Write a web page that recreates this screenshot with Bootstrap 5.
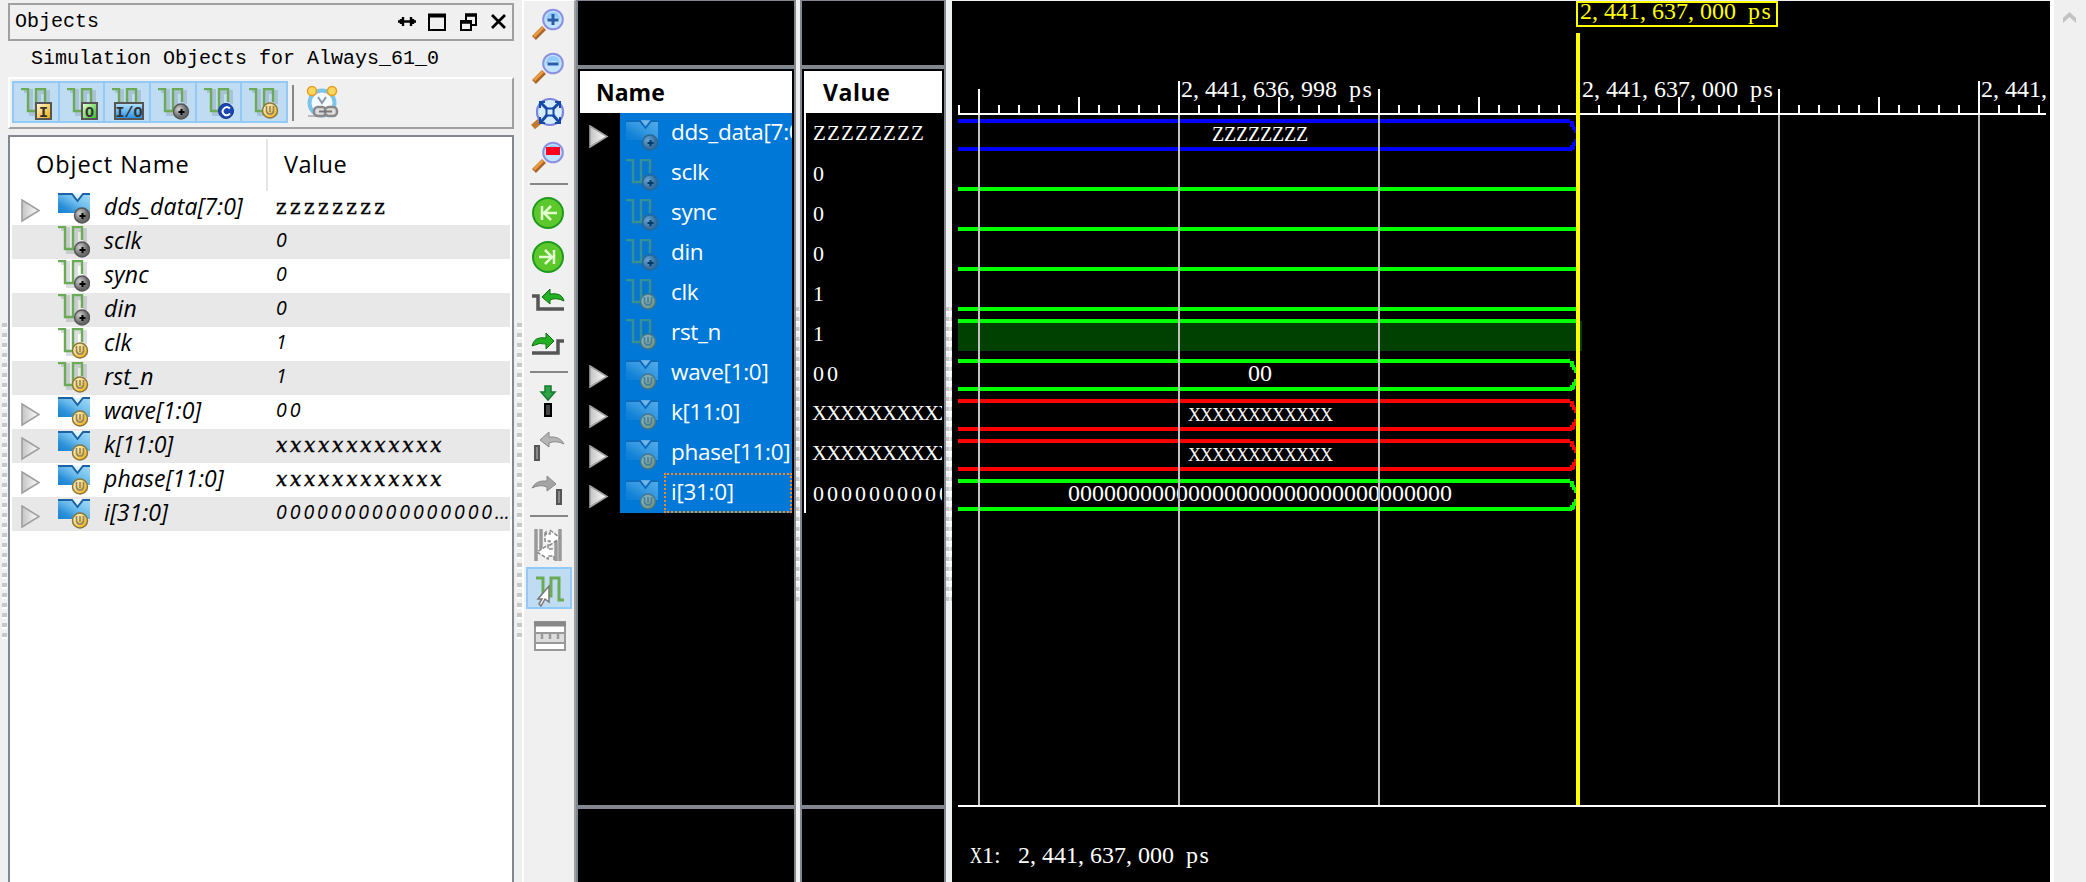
<!DOCTYPE html>
<html lang="en">
<head>
<meta charset="utf-8">
<title>Simulation Objects</title>
<link href="https://cdn.jsdelivr.net/npm/bootstrap@5.3.0/dist/css/bootstrap.min.css" rel="stylesheet">
<script src="https://cdn.jsdelivr.net/npm/bootstrap@5.3.0/dist/js/bootstrap.bundle.min.js"></script>
<style>
body{background:#f0f0f0;color:#000;height:882px;font-family:"Open Sans","Noto Sans",sans-serif;font-size:22.5px;line-height:1}
svg{display:block;flex:none}
.sim{font-family:"Liberation Mono",monospace;font-size:20px;white-space:pre}
/* objects panel */
.objects{width:522px;padding:3px 8px 0 8px}
.title-box{width:506px;height:38px;border:2px solid #a0a0a0;padding:0 6px 0 5px}
.sub-title{height:36px;padding:8px 0 0 23px}
.tool-row{width:506px;height:52px;border:2px solid;border-color:#fff #a0a0a0 #a0a0a0 #fff;padding:2px}
.filters{width:276px;height:42px;background:#91c9f7;padding:2px 0 2px 2px;gap:2px}
.filters>span{width:43.7px;height:38px;background:#c0dcf3;padding:5px 0 0 6px}
.tool-sep{width:2px;height:36px;background:#868686;margin:4px 12px 0 4px}
.tree{width:506px;height:760px;margin-top:6px;border:2px solid #828790;background:#fff;padding:2px}
.tree-head{height:52px;font-size:23.5px}
.tree-head .c1{width:256px;padding:14px 0 0 24px;border-right:2px solid #e5e5e5;letter-spacing:.95px}
.tree-head .c2{padding:14px 0 0 16px;letter-spacing:.5px}
.tree-row{height:34px;padding-left:9px}
.tree-row .arrow{width:37px}
.tree-row .icon{width:46px;padding-top:1px}
.tree-row .label{width:172px;font-style:italic;font-size:23px;letter-spacing:.15px;white-space:nowrap;padding-top:4px}
.tree-row .val{font-style:italic;white-space:nowrap;padding-top:5px;font-size:19.5px;letter-spacing:2.95px}
.tree-row .val.slab{font:italic 20px/1 "DejaVu Serif",serif;padding-top:6px;-webkit-text-stroke:.4px #000}
.slab.cx{letter-spacing:2.75px!important}
.slab.cz{letter-spacing:3.5px!important}
.tree-row .val.up{font-style:normal}
.grip{width:5px;height:316px;top:323px;background:repeating-linear-gradient(#c8c8c8 0 4px,#fff 4px 6px,#f0f0f0 6px 10px)}
/* icon toolbar */
.tools{width:54px;border-left:2px solid #fff;border-top:1px solid #fff;border-right:2px solid #a0a0a0}
/* list panes */
.pane{background:#000;border:2px solid #828790;border-top-width:1px;border-bottom:0;color:#fff}
.pane .top{height:64px}
.pane .head{height:48px;border-top:4px solid #828790;padding:2px 2px 0}
.pane .head div{background:#fff;color:#000;font-weight:700;height:42px;padding:10px 0 0 16px;font-size:23px}
.pane .mid{height:692px}
.pane .low{height:77px;border-top:4px solid #828790}
.names{width:220px}.values{width:146px}
.sel{background:#0078d7;width:172px;margin-right:2px}
.name-row{height:40px}
.name-row .arrow{width:42px;padding:12px 0 0 11px}
.name-row .icon{width:45px;padding:6px 0 0 6px;opacity:.5}
.name-row .label{width:127px;height:40px;padding:8px 0 0 6px;white-space:nowrap;overflow:hidden;letter-spacing:-.3px}
.name-row.cur .label{outline:2px dotted #f08a28;outline-offset:-2px;width:128px;margin-left:-1px;padding-left:7px}
.value-list{margin:0 2px;border-left:2px solid #fff;width:138px}
.value-list div{height:40px;padding:10px 0 0 7px;overflow:hidden;white-space:nowrap;font:22px/1 "Liberation Serif",serif;letter-spacing:3px}
.value-list .slab{font-size:21px}
.value-list .slab.cx{letter-spacing:-1.16px!important;padding-left:6px}
.value-list .slab.cz{letter-spacing:1.17px!important}
.split{background:#f0f0f0}
.split i{display:block;margin-top:307px;height:294px;background:repeating-linear-gradient(90deg,transparent 0 3px,#fff8 3px 5px),repeating-linear-gradient(#c8c8c8 0 4px,#fff 4px 6px,#f0f0f0 6px 10px)}
.scroller{width:36px;border-left:4px solid #fff}
</style>
</head>
<body class="overflow-hidden">
<svg width="0" height="0" class="position-absolute">
<defs>
<linearGradient id="gB" x1="0" y1="1" x2="1" y2="0"><stop offset="0" stop-color="#1a84d0"/><stop offset=".25" stop-color="#2c90d8"/><stop offset=".55" stop-color="#6cbcec"/><stop offset="1" stop-color="#a4dcf8"/></linearGradient>
<radialGradient id="gG" cx=".35" cy=".35"><stop offset="0" stop-color="#d0d0d0"/><stop offset="1" stop-color="#6a6a6a"/></radialGradient>
<linearGradient id="gY" x1="0" y1="0" x2="1" y2="1"><stop offset="0" stop-color="#fffbe0"/><stop offset="1" stop-color="#f0a800"/></linearGradient>
<linearGradient id="gN" x1="0" y1="0" x2="1" y2="1"><stop offset="0" stop-color="#eaffd8"/><stop offset="1" stop-color="#2fb81e"/></linearGradient>
<linearGradient id="gC" x1="0" y1="0" x2="0" y2="1"><stop offset="0" stop-color="#b8e4ff"/><stop offset="1" stop-color="#1e90e8"/></linearGradient>
<linearGradient id="gT" x1="0" y1="0" x2="1" y2="0"><stop offset="0" stop-color="#c4c4c4"/><stop offset="1" stop-color="#fff"/></linearGradient>
<g id="wavy"><path d="M3 3H10V26H18V4H27V16" fill="none" stroke="#5a6a70" stroke-opacity=".22" stroke-width="4"/><path d="M0 1H7V23H15V1H24V14" fill="none" stroke="#6cab55" stroke-width="2.400"/></g>
<g id="busy"><path d="M0 1H32V20H0Z" fill="url(#gB)"/><path d="M14 0L19.500 7L25 0Z" fill="#fff" fill-opacity=".75"/><path d="M0 1H14L19.500 8L25 1H32" fill="none" stroke="#1c62a4" stroke-width="2"/></g>
<g id="b-n"><circle cx="24" cy="23.500" r="7.500" fill="url(#gG)" stroke="#555" stroke-width="1.400"/><path d="M24.500 21V27M21.500 24H27.500" stroke="#000" stroke-width="2"/></g>
<g id="b-v"><circle cx="22" cy="22.500" r="7.500" fill="url(#gY)" stroke="#8a7638" stroke-width="1.500"/><path d="M18.500 18V23Q19 26 22 26T25.500 23V18M22 18V24" fill="none" stroke="#8f8660" stroke-width="1.600"/></g>
<g id="b-c"><circle cx="23" cy="23" r="7.500" fill="#1c45b4" stroke="#16368c"/><path d="M27 20.500Q23 17.500 20.500 21T22 27Q25 28 27 25.500" fill="none" stroke="#fff" stroke-width="2"/></g>
<g id="mag"><path d="M2 30L12 20" stroke="#a8662a" stroke-width="5.500"/><path d="M2 28.500L11 19.500" stroke="#ef9a3c" stroke-width="2.500"/><circle cx="21" cy="11.500" r="9.800" fill="#c0e4ff" stroke="#8c90e0" stroke-width="2"/><path d="M13.500 12Q20 6 28 11Q27 4 21 4T13.500 12Z" fill="#90caff"/></g>
</defs></svg>

<div class="d-flex" style="height:882px">
 <section class="objects position-relative flex-shrink-0">
  <div class="title-box d-flex align-items-center justify-content-between"><span class="sim">Objects</span>
   <svg width="110" height="20" viewBox="0 0 110 20" fill="none" stroke="#000" stroke-width="2"><path d="M2 9.500H20M7 5V14M5 7V12M15 5V14M17 7V12" stroke-width="2.400"/><path d="M33 3H49V18H33Z"/><path d="M32 3.500H50" stroke-width="4"/><path d="M65 9H75V18H65ZM70 8V3H80V13H76"/><path d="M64 10H76M69 3H81" stroke-width="3.500"/><path d="M96 3L109 16M109 3L96 16" stroke-width="2.800"/></svg>
  </div>
  <div class="sub-title sim">Simulation Objects for Always_61_0</div>
  <div class="tool-row d-flex">
   <div class="filters d-flex" id="filters"></div>
   <div class="tool-sep"></div>
   <svg class="mt-1" width="34" height="34" viewBox="0 0 34 34"><circle cx="16" cy="18" r="12.500" fill="#f4faff" stroke="#7cc4ec" stroke-width="4"/><circle cx="6" cy="6" r="4.500" fill="#ffd75c" stroke="#e0a020" stroke-width="1.500"/><circle cx="26" cy="6" r="4.500" fill="#ffd75c" stroke="#e0a020" stroke-width="1.500"/><path d="M12 12L16 18L20 12" stroke="#8898a8" stroke-width="2" fill="none"/><path d="M2 31H10" stroke="#bbb" stroke-width="2"/><rect x="8" y="22" width="12" height="9" rx="4" fill="#ddd" stroke="#888" stroke-width="2.500"/><rect x="19" y="22" width="12" height="9" rx="4" fill="#ddd" stroke="#888" stroke-width="2.500"/><path d="M13 26.500H26" stroke="#777" stroke-width="2"/></svg>
  </div>
  <div class="tree">
   <div class="tree-head d-flex"><div class="c1">Object Name</div><div class="c2">Value</div></div>
   <div id="tree"></div>
  </div>
  <div class="grip position-absolute start-0 ms-0" style="margin-left:2px!important"></div>
  <div class="grip position-absolute end-0"></div>
 </section>

 <nav class="tools flex-shrink-0">
  <svg width="50" height="670" viewBox="524 1 50 670">
   <g transform="translate(532 8)"><use href="#mag"/><path d="M21 6V17M15.500 12H26.500" stroke="#2a5ca8" stroke-width="3"/></g>
   <g transform="translate(532 52)"><use href="#mag"/><path d="M15.500 12H26.500" stroke="#2a5ca8" stroke-width="3"/></g>
   <g transform="translate(532 97)"><path d="M1 30L8 24" stroke="#c47830" stroke-width="6"/><circle cx="18" cy="15" r="13" fill="#d4ecff" stroke="#7c84dc" stroke-width="2.200"/><path d="M9 6L15 12M27 6L21 12M9 25L15 18M27 25L21 18" stroke="#1648a8" stroke-width="3"/><path d="M8 11V5H13M23 5H28V11M8 20V26H13M23 26H28V20M14.500 11.500H21.500V18.500H14.500Z" fill="none" stroke="#1648a8" stroke-width="2"/></g>
   <g transform="translate(532 141)"><use href="#mag"/><rect x="14" y="6" width="14" height="8" fill="#ff0020"/></g>
   <path d="M530 184H568M530 372H568M530 516H568" stroke="#868686" stroke-width="2"/>
   <g fill="#5cc82c" stroke="#1e9a1c" stroke-width="2"><circle cx="548" cy="213" r="15"/><circle cx="548" cy="257" r="15"/></g>
   <path d="M542 206V220M557 213H545M551 206L544 213L551 220M554 250V264M539 257H551M545 250L552 257L545 264" fill="none" stroke="#e4ffd0" stroke-width="2.500"/>
   <path d="M532 296H538V309H564" fill="none" stroke="#555" stroke-width="3.500"/><path d="M542 297L550 289V294Q562 292 564 301Q556 297 550 300V304Z" fill="#22b022" stroke="#107010"/>
   <path d="M564 341H558V353H532" fill="none" stroke="#555" stroke-width="3.500"/><path d="M554 341L546 333V338Q534 336 532 346Q540 342 546 344V349Z" fill="#22b022" stroke="#107010"/>
   <path d="M545 386H551V392H555L548 400L541 392H545Z" fill="#2ca444" stroke="#187830" stroke-width="1.500"/><rect x="545" y="404" width="6" height="12" fill="#444" stroke="#000" stroke-width="2"/>
   <path d="M540 440L549 432V437Q560 436 564 444Q556 440 549 443V447Z" fill="#b4b4b4" stroke="#888"/><rect x="535" y="446" width="4" height="14" fill="#888" stroke="#555" stroke-width="2"/>
   <path d="M556 484L547 476V481Q536 480 532 488Q540 484 547 487V491Z" fill="#a4a4a4" stroke="#888"/><rect x="557" y="490" width="4" height="14" fill="#888" stroke="#555" stroke-width="2"/>
   <path d="M536 529V561M541 529V549M556 541V561M560 529V561" stroke="#999" stroke-width="3.500"/><path d="M546 531V534H550V530L560 538L550 545V541H545V531M554 560V556H548V559L537 552L548 545V549H554" fill="#fff" stroke="#888" stroke-width="1.500" stroke-dasharray="4 1.500"/>
   <rect x="527" y="568" width="44" height="40" fill="#c0dcf3" stroke="#91c9f7" stroke-width="2"/>
   <path d="M536 578H543V596H551V578H559V600H564" fill="none" stroke="#6cab55" stroke-width="3"/><path d="M538 599L549 586V602L545 599L541 606L539 604L542 599Z" fill="#fff" stroke="#777" stroke-width="1.500"/>
   <rect x="535" y="622" width="30" height="28" fill="#fff" stroke="#999" stroke-width="2"/><path d="M534 624H566" stroke="#888" stroke-width="5"/><path d="M535 633H565V643H535Z" fill="#ddd" stroke="#999" stroke-width="2"/><path d="M542 634V639M550 634V639M558 634V639" stroke="#999" stroke-width="2.500"/>
  </svg>
 </nav>

 <section class="pane names flex-shrink-0">
  <div class="top"></div><div class="head"><div>Name</div></div>
  <div class="mid" id="names"></div><div class="low"></div>
 </section>
 <div class="split flex-shrink-0" style="width:4px"><i></i></div>
 <section class="pane values flex-shrink-0">
  <div class="top"></div><div class="head"><div class="ps-3" style="letter-spacing:.6px">&#8202;Value</div></div>
  <div class="mid"><div class="value-list" id="values"></div></div><div class="low"></div>
 </section>
 <div class="split flex-shrink-0" style="width:6px"><i></i></div>

 <section class="bg-black flex-shrink-0" style="width:1098px">
  <svg id="wave" width="1098" height="882" viewBox="952 0 1098 882" shape-rendering="crispEdges"></svg>
 </section>
 <aside class="scroller flex-shrink-0"><svg width="32" height="40"><path d="M9 23V18L15.500 12L22 18V23L15.500 17Z" fill="#c2c2c2"/></svg></aside>
</div>

<script>
const signals = [
 ['dds_data[7:0]','bus','n','zzzzzzzz','blue'],
 ['sclk','sig','n','0'],['sync','sig','n','0'],['din','sig','n','0'],
 ['clk','sig','v','1'],['rst_n','sig','v','1'],
 ['wave[1:0]','bus','v','00','lime'],
 ['k[11:0]','bus','v','xxxxxxxxxxxx','red'],
 ['phase[11:0]','bus','v','xxxxxxxxxxxx','red'],
 ['i[31:0]','bus','v','0'.repeat(32),'lime']];
const icon = (kind,b) => `<svg width="32" height="32"><use href="#${kind=='bus'?'busy':'wavy'}" y="${kind=='bus'?1:0}"/><use href="#b-${b}"/></svg>`;
const tri = `<svg width="20" height="24"><path d="M1 1L18 11.500L1 22Z" fill="url(#gT)" stroke="#a0a0a0" stroke-width="1.600"/></svg>`;
const boxed = (x,w,g,t) => `<rect x="${x}" y="15" width="${w}" height="16" fill="url(#${g})" stroke="#555" stroke-width="2"/><text x="${x+w/2}" y="28.500" text-anchor="middle" font-family="Liberation Mono" font-weight="700" font-size="15" fill="#333">${t}</text>`;
const slab = v => /x/.test(v) ? 'slab cx' : /z/.test(v) ? 'slab cz' : '';
document.getElementById('filters').innerHTML = [boxed(16,15,'gY','I'),boxed(16,15,'gN','O'),boxed(4,28,'gC','I/O'),'<use href="#b-n"/>','<use href="#b-c"/>','<use href="#b-v"/>']
 .map(b=>`<span><svg width="34" height="33"><use href="#wavy" x="1"/>${b}</svg></span>`).join('');
document.getElementById('tree').innerHTML = signals.map((s,i)=>{
 const v = s[3].length>20 ? '0'.repeat(16)+'<span style="letter-spacing:0">...</span>' : s[3];
 return `<div class="tree-row d-flex" style="background:${i%2?'#e8e8e8':'#fff'}"><div class="arrow pt-2">${s[1]=='bus'?tri:''}</div><div class="icon">${icon(s[1],s[2])}</div><div class="label">${s[0]}</div><div class="val ${slab(s[3])}${i?'':' up'}">${v}</div></div>`}).join('');
document.getElementById('names').innerHTML = signals.map((s,i)=>
 `<div class="name-row d-flex${i==9?' cur':''}"><div class="arrow flex-shrink-0">${s[1]=='bus'?tri:''}</div><div class="sel d-flex overflow-hidden"><div class="icon flex-shrink-0">${icon(s[1],s[2])}</div><div class="label flex-shrink-0 text-white">${s[0]}</div></div></div>`).join('');
document.getElementById('values').innerHTML = signals.map(s=>`<div class="${slab(s[3])}">${s[3].toUpperCase()}</div>`).join('');

// waveform canvas
const R=(x,y,w,h,f)=>`<rect x="${x}" y="${y}" width="${w}" height="${h}" fill="${f}"/>`;
// every character occupies one 12px cell
const T=(x,y,t,f='#fff')=>{
 const size=/^X+$/.test(t)?18:/^Z+$/.test(t)?20:24;
 const xs=[...t].map((c,i)=>x+12*i+(c=='s'?1.5:0)).join(' ');
 return `<text xml:space="preserve" x="${xs}" y="${y}" fill="${f}" font-family="Liberation Serif" font-size="${size}">${t}</text>`};
let o='';
o+=R(952,0,1098,1,'#f0f0f0');
signals.forEach((s,i)=>{
 const y=113+40*i;
 if(s[1]=='bus'){
  o+=R(958,y+6,612,4,s[4])+R(958,y+34,614,4,s[4]);
  o+=R(1570,y+8,4,6,s[4])+R(1572,y+12,3,5,s[4])+R(1574,y+14,3,6,s[4])+R(1574,y+26,3,7,s[4])+R(1572,y+29,3,7,s[4])+R(1570,y+32,4,5,s[4]);
  const t=s[3].toUpperCase(); o+=T(1260-t.length*6,y+28,t);
 }else if(i<5) o+=R(958,y+34,618,4,'lime');
 else o+=R(958,y+8,624,30,'#004000')+R(958,y+6,618,4,'lime');
});
for(let x=958,k=-1;x<2046;x+=20,k++){
 const top = k%20==0 ? 89 : k%20==10 ? 81 : k%5==0 ? 97 : 105;
 o+=R(x,top,2,10+105-top,'#fff');
 if(k%10==0) o+=R(x,115,2,690,'#c0c0c0');
}
o+=R(958,113,1088,2,'#fff')+R(958,805,1088,2,'#fff');
o+=T(1181,97,'2,441,636,998 ps')+T(1582,97,'2,441,637,000 ps')+T(1981,97,'2,441,');
o+=R(1576,33,4,772,'#ff0')+'<rect x="1577" y="2" width="200" height="24" fill="#000" stroke="#ff0" stroke-width="2"/>';
o+=T(1580,19,'2,441,637,000 ps','#ff0');
// narrow capital so that it stays inside its cell
o+='<text x="970" y="863" fill="#fff" font-family="Liberation Serif" font-size="24" textLength="12" lengthAdjust="spacingAndGlyphs">X</text>'+T(982,863,'1: 2,441,637,000 ps');
document.getElementById('wave').innerHTML=o;
</script>
</body>
</html>
